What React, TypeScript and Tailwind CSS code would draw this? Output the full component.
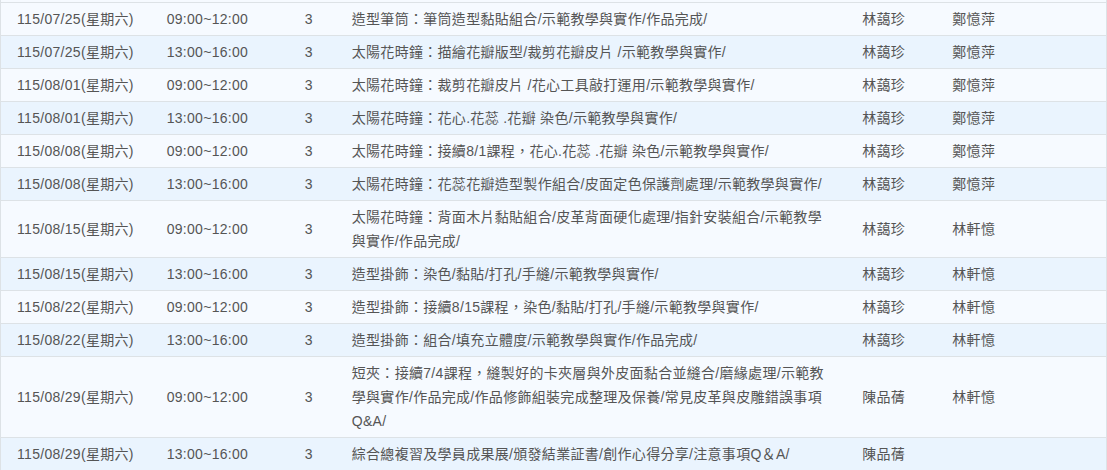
const rows = [
  ['115/07/25(星期六)', '09:00~12:00', '3', '造型筆筒：筆筒造型黏貼組合/示範教學與實作/作品完成/', '林藹珍', '鄭憶萍'],
  ['115/07/25(星期六)', '13:00~16:00', '3', '太陽花時鐘：描繪花瓣版型/裁剪花瓣皮片 /示範教學與實作/', '林藹珍', '鄭憶萍'],
  ['115/08/01(星期六)', '09:00~12:00', '3', '太陽花時鐘：裁剪花瓣皮片 /花心工具敲打運用/示範教學與實作/', '林藹珍', '鄭憶萍'],
  ['115/08/01(星期六)', '13:00~16:00', '3', '太陽花時鐘：花心.花蕊 .花瓣 染色/示範教學與實作/', '林藹珍', '鄭憶萍'],
  ['115/08/08(星期六)', '09:00~12:00', '3', '太陽花時鐘：接續8/1課程，花心.花蕊 .花瓣 染色/示範教學與實作/', '林藹珍', '鄭憶萍'],
  ['115/08/08(星期六)', '13:00~16:00', '3', '太陽花時鐘：花蕊花瓣造型製作組合/皮面定色保護劑處理/示範教學與實作/', '林藹珍', '鄭憶萍'],
  ['115/08/15(星期六)', '09:00~12:00', '3', '太陽花時鐘：背面木片黏貼組合/皮革背面硬化處理/指針安裝組合/示範教學與實作/作品完成/', '林藹珍', '林軒憶'],
  ['115/08/15(星期六)', '13:00~16:00', '3', '造型掛飾：染色/黏貼/打孔/手縫/示範教學與實作/', '林藹珍', '林軒憶'],
  ['115/08/22(星期六)', '09:00~12:00', '3', '造型掛飾：接續8/15課程，染色/黏貼/打孔/手縫/示範教學與實作/', '林藹珍', '林軒憶'],
  ['115/08/22(星期六)', '13:00~16:00', '3', '造型掛飾：組合/填充立體度/示範教學與實作/作品完成/', '林藹珍', '林軒憶'],
  ['115/08/29(星期六)', '09:00~12:00', '3', '短夾：接續7/4課程，縫製好的卡夾層與外皮面黏合並縫合/磨緣處理/示範教學與實作/作品完成/作品修飾組裝完成整理及保養/常見皮革與皮雕錯誤事項Q&A/', '陳品蒨', '林軒憶'],
  ['115/08/29(星期六)', '13:00~16:00', '3', '綜合總複習及學員成果展/頒發結業証書/創作心得分享/注意事項Q＆A/', '陳品蒨', ''],
];

export default function App() {
  return (
    <div
      className="w-[1107px] h-[470px] overflow-hidden bg-white text-[14px] leading-[24px] tracking-[0.3px] text-[#555]"
      style={{ fontFamily: '"Liberation Sans", Arial, "Noto Sans CJK TC", sans-serif' }}
    >
      <div className="h-[2px] bg-[#f6faff] border-x border-[#dde2e6]"></div>
      <table className="w-full table-fixed border-collapse border-x border-[#dde2e6]">
        <colgroup>
          <col className="w-[150px]" />
          <col className="w-[138px]" />
          <col className="w-[47px]" />
          <col className="w-[510px]" />
          <col className="w-[90px]" />
          <col className="w-[170px]" />
        </colgroup>
        <tbody>
          {rows.map((r, i) => (
            <tr
              key={i}
              className={(i % 2 === 0 ? 'bg-[#f6faff]' : 'bg-[#eaf4fe]') + ' border-t border-[#dde2e6]'}
            >
              {r.map((c, j) => (
                <td key={j} className="px-4 py-1 align-middle">
                  {c}
                </td>
              ))}
            </tr>
          ))}
        </tbody>
      </table>
    </div>
  );
}
